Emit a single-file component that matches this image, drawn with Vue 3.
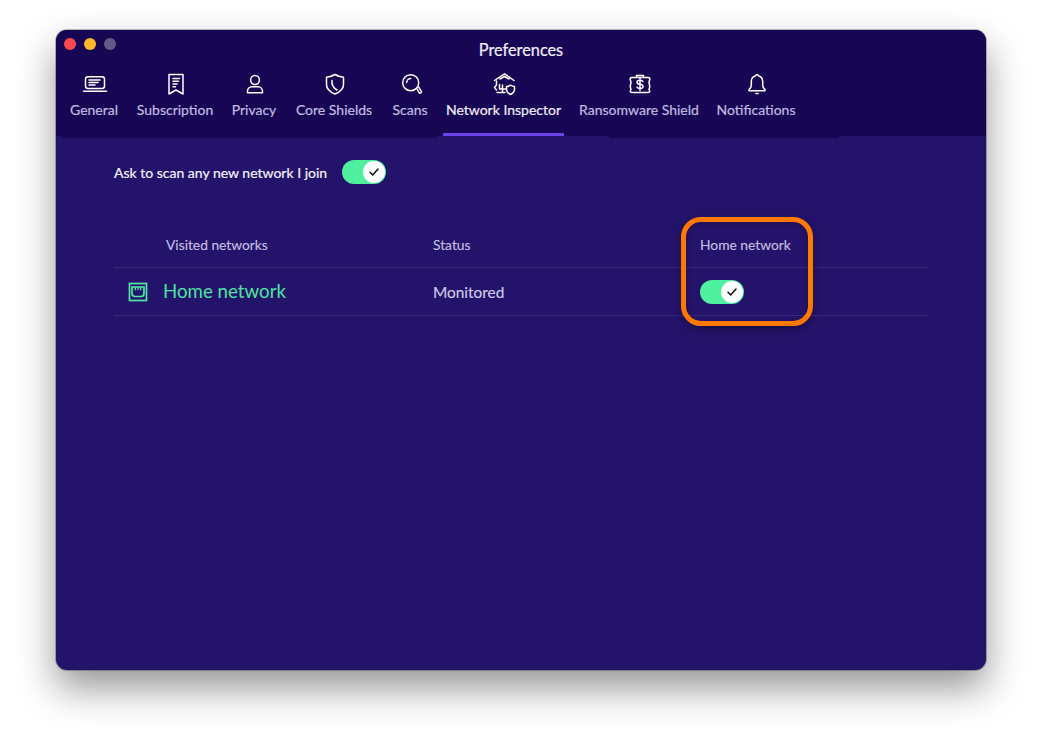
<script setup>
const tabs = [
  { name: 'General', icon: 'general' },
  { name: 'Subscription', icon: 'subscription' },
  { name: 'Privacy', icon: 'privacy' },
  { name: 'Core Shields', icon: 'shield' },
  { name: 'Scans', icon: 'scans' },
  { name: 'Network Inspector', icon: 'network', active: true },
  { name: 'Ransomware Shield', icon: 'ransom' },
  { name: 'Notifications', icon: 'bell' }
]
</script>

<template>
  <div class="page">
    <div class="window">
      <header class="header">
        <div class="lights">
          <span class="light red"></span>
          <span class="light yellow"></span>
          <span class="light grey"></span>
        </div>
        <div class="title">Preferences</div>
        <nav class="tabs">
          <div v-for="tab in tabs" :key="tab.name" class="tab" :class="{ active: tab.active }">
            <svg class="tab-icon" width="28" height="26" viewBox="0 0 28 26" fill="none" stroke="currentColor" stroke-width="1.5" stroke-linecap="round" stroke-linejoin="round">
              <template v-if="tab.icon === 'general'">
                <rect x="4.500" y="4.700" width="19" height="11.800" rx="2.500" />
                <path d="M2.500 19.200h23M8 8h11M8 10.500h9M8 13h6" />
              </template>
              <template v-else-if="tab.icon === 'subscription'">
                <path d="M7 2.500h14v19.500l-7-4-7 4z" />
                <path d="M11 6.500h6.500M11 9.300h5.500M11 12h4M11 14.700h2.500" />
              </template>
              <template v-else-if="tab.icon === 'privacy'">
                <circle cx="14" cy="8" r="4.400" />
                <path d="M6.500 20.800v-1.500c0-2.500 2-4.500 4.500-4.500h6c2.500 0 4.500 2 4.500 4.500v1.500z" />
              </template>
              <template v-else-if="tab.icon === 'shield'">
                <path d="M14 2.500c2.500 1.600 5.500 2.600 8.500 2.800v7.200c0 4.500-3.500 7.500-8.500 9.500-5-2-8.500-5-8.500-9.500v-7.200c3-.2 6-1.200 8.500-2.800z" />
                <path d="M11 8.500c-.5 4 1 7.200 5 9.500" />
              </template>
              <template v-else-if="tab.icon === 'scans'">
                <circle cx="13.700" cy="10.700" r="8" />
                <path d="M9.700 10.500c0-2.200 1.800-4 4-4" />
                <path d="M19.700 16.500l2.300 4a1.300 1.300 0 0 0 2.200-1.400l-2.500-4" />
              </template>
              <template v-else-if="tab.icon === 'network'">
                <path d="M3.500 8.500 13.500 1.800 23 8.500M9 7l4.500-2.500L18 7" />
                <path d="M5.500 9v4l-2 2.500 2 2.500" />
                <path d="M8.500 12.500v4.500h6M11.500 13v7.500M6 20.500h8" />
                <path d="M15.500 14.500c1.500 0 3-.6 4-1.300 1 .7 2.500 1.300 4 1.300v3c0 2.300-1.700 3.800-4 5-2.300-1.200-4-2.700-4-5z" />
              </template>
              <template v-else-if="tab.icon === 'ransom'">
                <path d="M6 5.500h16c1 0 1.800.7 1.800 1.700l-.8 3.300.8 4-.8 3 .8 1.500c0 1-.8 1.500-1.800 1.500h-16c-1 0-1.800-.5-1.800-1.500l.8-1.500-.8-3 .8-4-.8-3.300c0-1 .8-1.700 1.800-1.700z" />
                <path d="M10.500 5.500v-2h7v2" />
                <path d="M17 9.500c-.5-.9-1.500-1.300-3-1.300s-3 .6-3 2 1.500 1.900 3 2.100 3 .8 3 2.100-1.500 2-3 2-2.500-.4-3-1.300M14 6.700v11.800" />
              </template>
              <template v-else>
                <path d="M14 2.500c.7 0 1.200.5 1.300 1.200 2.800.7 4.400 3.200 4.400 6v3.500c0 2.200 1 3.500 2.300 4.500v1H6v-1c1.300-1 2.300-2.300 2.300-4.500v-3.500c0-2.800 1.600-5.300 4.400-6 .1-.7.600-1.200 1.300-1.200z" />
                <path d="M12.800 21.500h2.400" />
              </template>
            </svg>
            <span class="tab-label">{{ tab.name }}</span>
          </div>
        </nav>
      </header>
      <div class="tab-edge">
        <span class="edge w5"></span>
        <span class="edge dark w376"></span>
        <span class="edge w172"></span>
        <span class="edge dark w230"></span>
      </div>

      <main class="content">
        <div class="ask-row">
          <span class="ask-label">Ask to scan any new network I join</span>
          <span class="toggle">
            <span class="knob">
              <svg width="10" height="8" viewBox="0 0 10 8" fill="none" stroke="#111" stroke-width="1.500" stroke-linecap="round" stroke-linejoin="round"><path d="M1 4.200 3.700 7 9 1" /></svg>
            </span>
          </span>
        </div>

        <div class="table">
          <div class="row head">
            <span class="col-name">Visited networks</span>
            <span class="col-status">Status</span>
            <span class="col-home">Home network</span>
          </div>
          <div class="row item">
            <span class="col-name network-name">
              <svg class="net-icon" width="20" height="20" viewBox="0 0 20 20" fill="none" stroke="#4fe8a4" stroke-width="1.700">
                <rect x="1.500" y="1.500" width="17" height="17" />
                <path d="M4 5h12v6.500c0 2-1.200 3-3 3H7c-1.800 0-3-1-3-3z" />
                <path d="M7.300 5v3.200M10 5v3.200M12.700 5v3.200" stroke-width="1.300" />
              </svg>
              <span class="network-text">Home network</span>
            </span>
            <span class="col-status monitored">Monitored</span>
            <span class="col-home">
              <span class="toggle">
                <span class="knob">
                  <svg width="10" height="8" viewBox="0 0 10 8" fill="none" stroke="#111" stroke-width="1.500" stroke-linecap="round" stroke-linejoin="round"><path d="M1 4.200 3.700 7 9 1" /></svg>
                </span>
              </span>
            </span>
          </div>
          <div class="highlight"></div>
        </div>
      </main>
    </div>
  </div>
</template>

<style>
html, body {
  margin: 0;
  background: #fff;
}
</style>

<style scoped>
.page {
  width: 1046px;
  height: 736px;
  box-sizing: border-box;
  padding: 30px 60px 66px 56px;
  overflow: hidden;
  background: #fff;
  font-family: Lato, "Liberation Sans", sans-serif;
}

.window {
  height: 640px;
  display: flex;
  flex-direction: column;
  background: #24136a;
  border-radius: 11px;
  overflow: hidden;
  box-shadow: 0 0 0 1px rgba(0, 0, 0, 0.25), 0 18px 38px rgba(0, 0, 0, 0.42);
}

.header {
  height: 106px;
  flex: none;
  background: #170654;
  position: relative;
}

.lights {
  display: flex;
  gap: 8px;
  padding: 8px 0 0 8px;
}

.light {
  width: 12px;
  height: 12px;
  border-radius: 50%;
}
.red { background: #fb4a4f; }
.yellow { background: #fdb82a; }
.grey { background: #625a85; }

.title {
  position: absolute;
  top: 10px;
  left: 0;
  right: 0;
  text-align: center;
  font-size: 16.300px;
  color: #f1eff9;
  -webkit-text-stroke: 0.2px currentColor;
}

.tabs {
  display: grid;
  grid-template-columns: 56px 84px 52px 86px 44px 121px 128px 84px;
  gap: 11px;
  padding: 22px 0 0 10px;
}

.tab {
  height: 64px;
  box-sizing: border-box;
  display: flex;
  flex-direction: column;
  align-items: center;
  color: #fff;
  border-bottom: 3px solid transparent;
}

.tab.active {
  border-bottom-color: #6a45ee;
}

.tab-icon {
  display: block;
  flex: none;
  margin: 0 0 3px 2px;
}

.tab-label {
  font-size: 14px;
  line-height: 18px;
  white-space: nowrap;
  color: #c2bde0;
  -webkit-text-stroke: 0.2px currentColor;
}

.tab.active .tab-label {
  color: #f1eff9;
}

.tab-edge {
  display: flex;
  height: 2px;
  flex: none;
}
.edge { display: block; }
.edge.dark { background: #170654; }
.w5 { width: 5px; }
.w376 { width: 376px; }
.w172 { width: 172px; }
.w230 { width: 230px; }

.content {
  padding: 22px 58px 0;
}

.ask-row {
  display: flex;
  align-items: center;
  gap: 15px;
  height: 24px;
}

.ask-label {
  font-size: 14px;
  color: #f4f2fb;
  -webkit-text-stroke: 0.2px currentColor;
}

.toggle {
  width: 44px;
  height: 24px;
  box-sizing: border-box;
  padding: 1px 1px 1px 0;
  display: flex;
  justify-content: flex-end;
  background: #4ff09f;
  border-radius: 12px;
}

.knob {
  width: 22px;
  height: 22px;
  display: flex;
  align-items: center;
  justify-content: center;
  background: #fff;
  border-radius: 50%;
}

.table {
  position: relative;
  margin-top: 33px;
}

.row {
  display: grid;
  grid-template-columns: 319px 267px 1fr;
  border-bottom: 1px solid #3a2a7c;
}

.head {
  height: 51px;
  align-items: center;
  padding-top: 5px;
  box-sizing: border-box;
  font-size: 13.800px;
  color: #c4bfe0;
  -webkit-text-stroke: 0.15px currentColor;
}

.head .col-name {
  padding-left: 52px;
}

.item {
  height: 47px;
  align-items: center;
}

.network-name {
  display: flex;
  align-items: center;
  gap: 15px;
  padding-left: 14px;
  font-size: 18.700px;
  color: #4be3a0;
}

.network-text {
  padding-bottom: 2px;
}

.net-icon {
  flex: none;
}

.monitored {
  font-size: 15.400px;
  color: #cfcae6;
  -webkit-text-stroke: 0.15px currentColor;
}

.item .col-home {
  padding-top: 1px;
}

.highlight {
  position: absolute;
  left: 567px;
  top: 0;
  width: 132px;
  height: 109px;
  box-sizing: border-box;
  border: 5px solid #ff7800;
  border-radius: 20px;
  box-shadow: 0 3px 8px rgba(0, 0, 0, 0.35), inset 0 2px 6px rgba(0, 0, 0, 0.2);
}
</style>
